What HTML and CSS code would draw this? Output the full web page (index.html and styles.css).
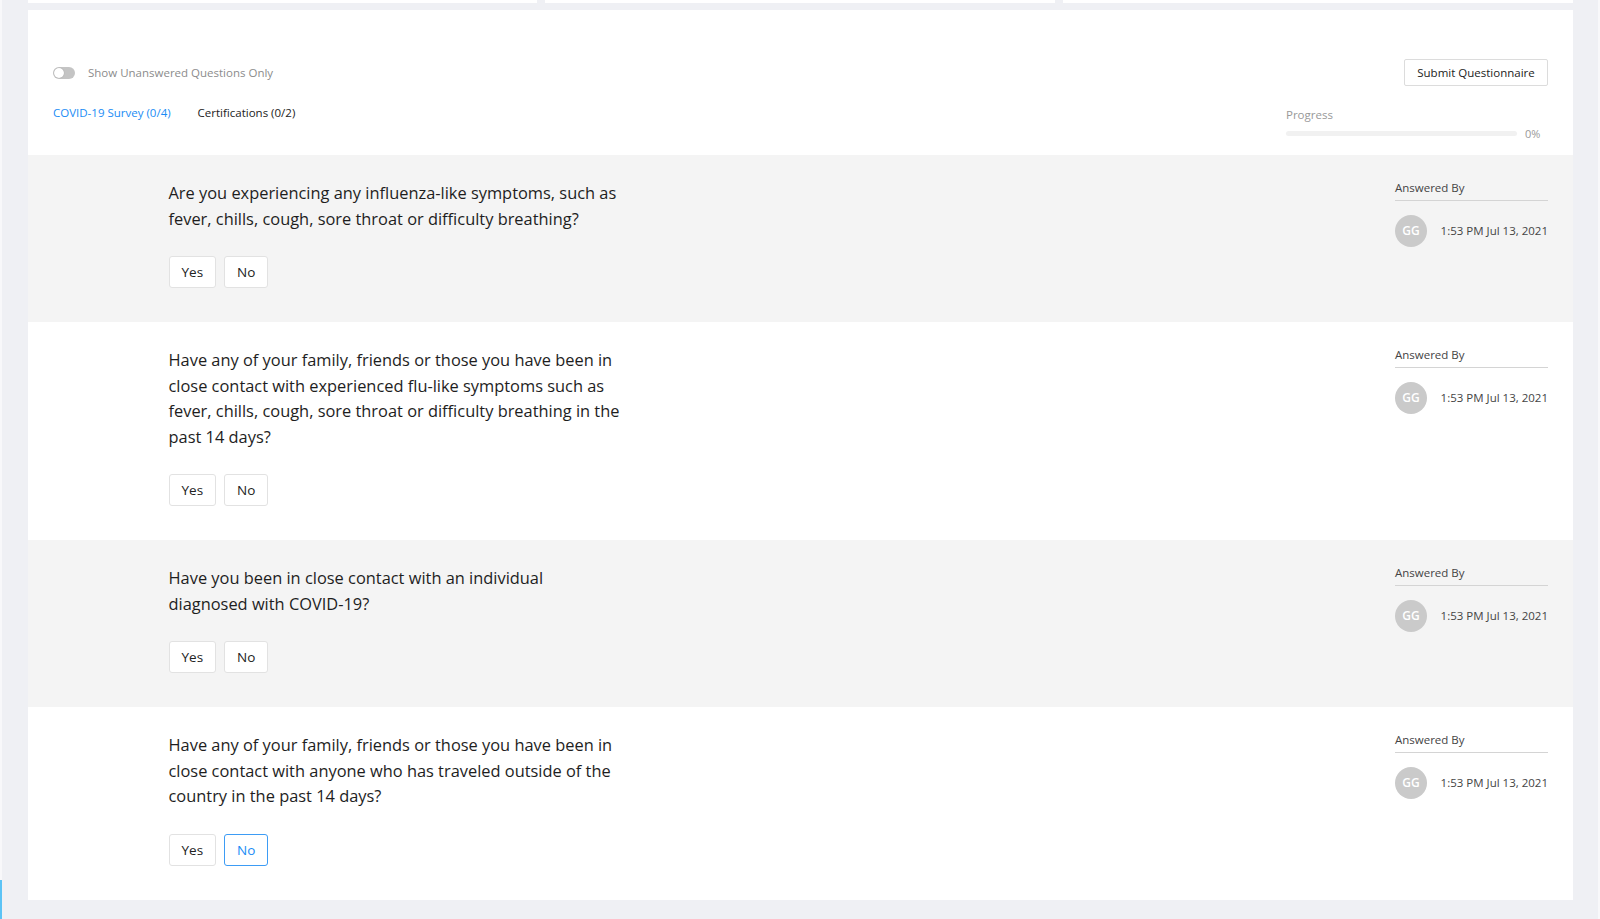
FILE: index.html
```html
<!DOCTYPE html>
<html lang="en">

<head>
    <meta charset="UTF-8">
    <title>Questionnaire</title>
    <link rel="stylesheet" href="styles.css">
</head>

<body>
    <div class="page">
        <div class="rail">
            <div class="rail-active"></div>
        </div>

        <div class="content">
            <div class="top-cards">
                <div class="top-card"></div>
                <div class="top-card"></div>
                <div class="top-card"></div>
            </div>

            <div class="card">
                <div class="card-header">
                    <div class="header-row">
                        <label class="toggle-wrap">
                            <span class="toggle"><span class="toggle-knob"></span></span>
                            <span class="toggle-label">Show Unanswered Questions Only</span>
                        </label>
                        <button class="submit-btn">Submit Questionnaire</button>
                    </div>
                    <div class="header-row second">
                        <div class="tabs">
                            <span class="tab active">COVID-19 Survey (0/4)</span>
                            <span class="tab">Certifications (0/2)</span>
                        </div>
                        <div class="progress">
                            <div class="progress-label">Progress</div>
                            <div class="progress-line">
                                <div class="progress-bar"><div class="progress-fill" style="width: 0%"></div></div>
                                <span class="progress-value">0%</span>
                            </div>
                        </div>
                    </div>
                </div>

                <div class="question shaded">
                    <div class="question-main">
                        <p class="question-text">Are you experiencing any influenza-like symptoms, such as fever, chills, cough, sore throat or difficulty breathing?</p>
                        <div class="answers">
                            <button class="answer">Yes</button>
                            <button class="answer">No</button>
                        </div>
                    </div>
                    <div class="answered">
                        <div class="answered-title">Answered By</div>
                        <div class="answered-row">
                            <span class="avatar">GG</span>
                            <span class="answered-date">1:53 PM Jul 13, 2021</span>
                        </div>
                    </div>
                </div>

                <div class="question">
                    <div class="question-main">
                        <p class="question-text">Have any of your family, friends or those you have been in close contact with experienced flu-like symptoms such as fever, chills, cough, sore throat or difficulty breathing in the past 14 days?</p>
                        <div class="answers">
                            <button class="answer">Yes</button>
                            <button class="answer">No</button>
                        </div>
                    </div>
                    <div class="answered">
                        <div class="answered-title">Answered By</div>
                        <div class="answered-row">
                            <span class="avatar">GG</span>
                            <span class="answered-date">1:53 PM Jul 13, 2021</span>
                        </div>
                    </div>
                </div>

                <div class="question shaded">
                    <div class="question-main">
                        <p class="question-text">Have you been in close contact with an individual diagnosed with COVID-19?</p>
                        <div class="answers">
                            <button class="answer">Yes</button>
                            <button class="answer">No</button>
                        </div>
                    </div>
                    <div class="answered">
                        <div class="answered-title">Answered By</div>
                        <div class="answered-row">
                            <span class="avatar">GG</span>
                            <span class="answered-date">1:53 PM Jul 13, 2021</span>
                        </div>
                    </div>
                </div>

                <div class="question">
                    <div class="question-main">
                        <p class="question-text">Have any of your family, friends or those you have been in close contact with anyone who has traveled outside of the country in the past 14 days?</p>
                        <div class="answers">
                            <button class="answer">Yes</button>
                            <button class="answer selected">No</button>
                        </div>
                    </div>
                    <div class="answered">
                        <div class="answered-title">Answered By</div>
                        <div class="answered-row">
                            <span class="avatar">GG</span>
                            <span class="answered-date">1:53 PM Jul 13, 2021</span>
                        </div>
                    </div>
                </div>
            </div>
        </div>

        <div class="rail right"></div>
    </div>
</body>

</html>
```

FILE: styles.css
```css
body,
html {
    margin: 0;
    padding: 0;
    overflow: hidden;
    font-family: "Open Sans", Arial, sans-serif;
    background: #eff0f4;
    color: #222;
}

.page {
    display: flex;
    height: 919px;
}

.rail {
    width: 2px;
    flex-shrink: 0;
    background: #f8f8fa;
    display: flex;
    flex-direction: column;
    justify-content: flex-end;
}

.rail-active {
    height: 39px;
    background: #5cc3f5;
}

.content {
    flex: 1;
    padding: 0 25px 0 25.5px;
    min-width: 0;
}

.top-cards {
    display: grid;
    grid-template-columns: 1fr 1fr 1fr;
    gap: 8px;
    height: 3px;
    margin-bottom: 7px;
}

.top-card {
    background: #fff;
}

.card {
    background: #fff;
}

/* header */
.card-header {
    height: 145px;
    box-sizing: border-box;
    padding: 49px 25px 0 25.5px;
}

.header-row {
    display: flex;
    justify-content: space-between;
    align-items: center;
}

.header-row.second {
    align-items: flex-start;
    margin-top: 18px;
}

.toggle-wrap {
    display: flex;
    align-items: center;
    gap: 13px;
    cursor: pointer;
}

.toggle {
    width: 22px;
    height: 12px;
    border-radius: 6px;
    background: #c4c4c4;
    display: flex;
    align-items: center;
    padding: 0 1px;
    box-sizing: border-box;
}

.toggle-knob {
    width: 10px;
    height: 10px;
    border-radius: 50%;
    background: #fff;
    box-shadow: 0 0 1px rgba(0, 0, 0, 0.3);
}

.toggle-label {
    font-size: 11.5px;
    color: #8c8c8c;
}

.submit-btn {
    font-family: inherit;
    font-size: 11.5px;
    color: #222;
    background: #fff;
    border: 1px solid #dcdcdc;
    border-radius: 2px;
    height: 27px;
    width: 144px;
    padding: 0;
    cursor: pointer;
}

.tabs {
    display: flex;
    gap: 27px;
    padding-top: 1px;
}

.tab {
    font-size: 11.5px;
    line-height: 16px;
    color: #222;
    cursor: pointer;
}

.tab.active {
    color: #1a8cf5;
}

.progress {
    width: 262px;
    padding-top: 3px;
}

.progress-label {
    font-size: 11.5px;
    line-height: 16px;
    color: #999;
}

.progress-line {
    display: flex;
    align-items: center;
    gap: 8px;
    margin-top: 3px;
}

.progress-bar {
    width: 231px;
    height: 5px;
    border-radius: 3px;
    background: #f1f1f1;
    overflow: hidden;
}

.progress-fill {
    height: 100%;
    background: #1a8cf5;
}

.progress-value {
    font-size: 11px;
    color: #999;
}

/* questions */
.question {
    display: flex;
    justify-content: space-between;
    padding: 25px 25px 34px 141px;
}

.question.shaded {
    background: #f4f4f4;
}

.question-text {
    margin: 0;
    width: 454px;
    font-size: 16.4px;
    line-height: 25.5px;
    color: #1e1e1e;
}

.answers {
    display: flex;
    gap: 8px;
    margin-top: 25px;
}

.answer {
    font-family: inherit;
    font-size: 13.5px;
    color: #222;
    background: #fff;
    border: 1px solid #e2e2e2;
    border-radius: 3px;
    height: 32px;
    min-width: 44px;
    padding: 0 12px;
    cursor: pointer;
}

.answer.selected {
    border-color: #3d9cf5;
    color: #1a8cf5;
}

.answered {
    width: 153px;
}

.answered-title {
    font-size: 11.5px;
    line-height: 16px;
    color: #444;
    padding-bottom: 4px;
    border-bottom: 1px solid #d4d4d4;
}

.answered-row {
    display: flex;
    align-items: center;
    justify-content: space-between;
    margin-top: 13.5px;
}

.avatar {
    width: 32px;
    height: 32px;
    border-radius: 50%;
    background: #cacaca;
    color: #fff;
    font-size: 12px;
    font-weight: 600;
    display: flex;
    align-items: center;
    justify-content: center;
}

.answered-date {
    font-size: 11.5px;
    color: #444;
}
```
